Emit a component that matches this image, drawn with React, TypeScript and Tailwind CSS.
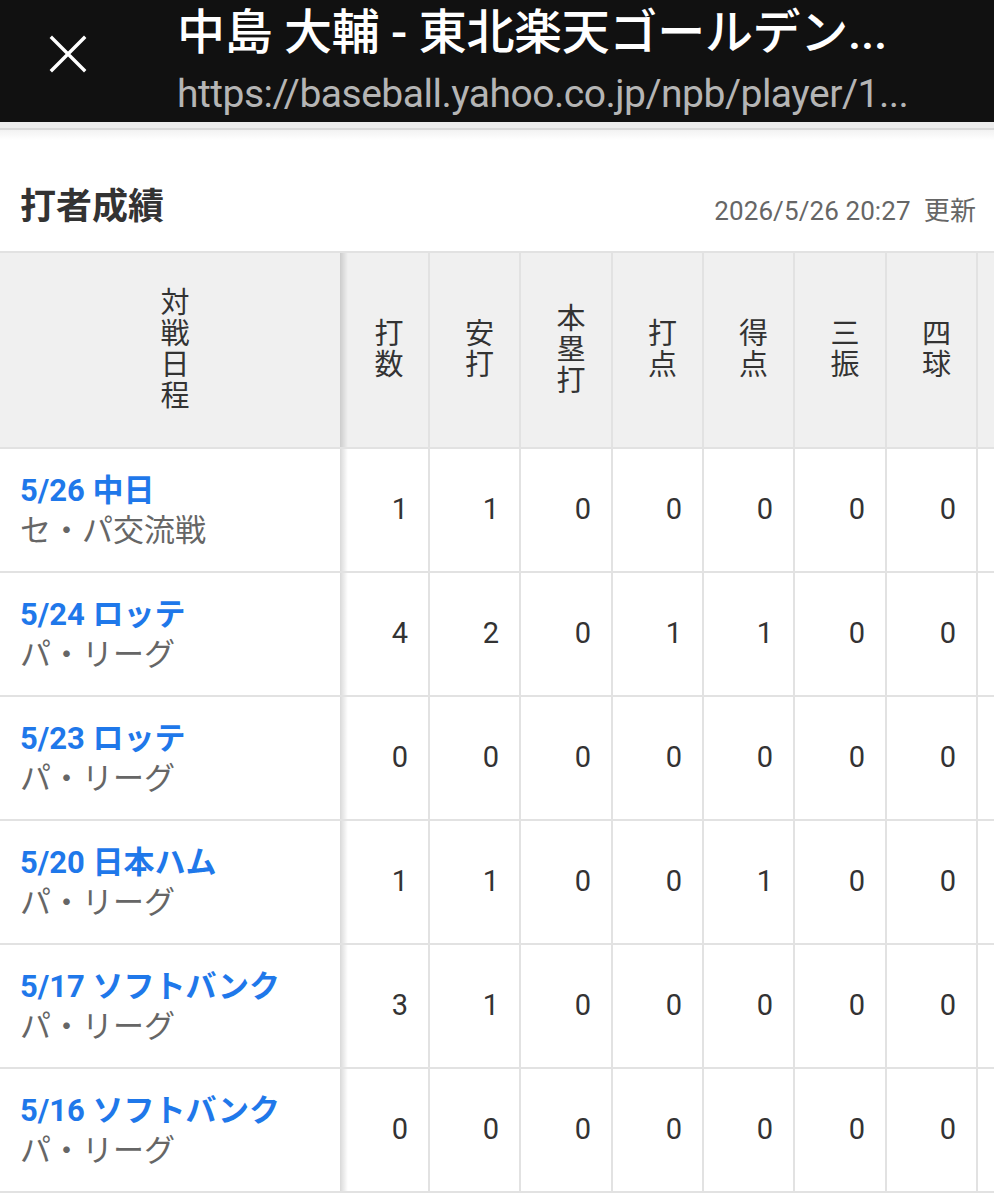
import React from "react";

const FONT = { fontFamily: "Roboto, 'Noto Sans CJK JP', 'Noto Sans', sans-serif" };

const headers = ["打数", "安打", "本塁打", "打点", "得点", "三振", "四球"];
const widths = ["w-[90px]", "w-[91px]", "w-[92px]", "w-[91px]", "w-[91px]", "w-[92px]", "w-[91px]"];

const rows = [
  { date: "5/26 中日", league: "セ・パ交流戦", v: [1, 1, 0, 0, 0, 0, 0] },
  { date: "5/24 ロッテ", league: "パ・リーグ", v: [4, 2, 0, 1, 1, 0, 0] },
  { date: "5/23 ロッテ", league: "パ・リーグ", v: [0, 0, 0, 0, 0, 0, 0] },
  { date: "5/20 日本ハム", league: "パ・リーグ", v: [1, 1, 0, 0, 1, 0, 0] },
  { date: "5/17 ソフトバンク", league: "パ・リーグ", v: [3, 1, 0, 0, 0, 0, 0] },
  { date: "5/16 ソフトバンク", league: "パ・リーグ", v: [0, 0, 0, 0, 0, 0, 0] },
];

function VText({ text }: { text: string }) {
  return (
    <div className="flex flex-col items-center text-[29px] leading-[31px] text-[#333]">
      {text.split("").map((c, i) => (
        <span key={i} className="block h-[31px]">
          {c}
        </span>
      ))}
    </div>
  );
}

const firstCol =
  "relative z-10 w-[340px] shrink-0 after:content-[''] after:absolute after:top-0 after:bottom-0 after:left-full after:w-[8px] after:bg-gradient-to-r after:from-black/15 after:to-transparent";

export default function App() {
  return (
    <div className="w-[994px] h-[1200px] overflow-hidden bg-white" style={FONT}>
      {/* top bar */}
      <div className="h-[122px] bg-[#111111] flex items-start">
        <div className="w-[136px] h-[108px] flex items-center justify-center shrink-0">
          <svg width="38" height="38" viewBox="0 0 38 38">
            <path d="M3 3 L35 35 M35 3 L3 35" stroke="#ffffff" strokeWidth="3.4" strokeLinecap="square" />
          </svg>
        </div>
        <div className="pl-[41px] pt-[5px] flex flex-col min-w-0">
          <div className="text-white text-[48px] leading-[56px] font-medium whitespace-nowrap tracking-[-0.3px]">
            中島 大輔 - 東北楽天ゴールデン...
          </div>
          <div className="text-[#b5b5b5] text-[39px] leading-[46px] mt-[10px] whitespace-nowrap tracking-[-0.5px]">
            https://baseball.yahoo.co.jp/npb/player/1...
          </div>
        </div>
      </div>
      <div className="h-[6px] bg-[#ededed]" />
      <div className="h-[2px] bg-[#d9d9d9]" />
      <div className="h-[10px] bg-gradient-to-b from-[#f2f2f2] to-white" />

      {/* section heading */}
      <div className="flex items-center justify-between px-[20px] h-[111px] pt-[23px]">
        <div className="text-[36px] leading-[44px] font-bold text-[#333]">打者成績</div>
        <div className="text-[26px] leading-[34px] text-[#666] mt-[8px] -mr-[2px] tracking-[0.1px]">
          2026/5/26 20:27&nbsp;&nbsp;更新
        </div>
      </div>

      {/* table */}
      <div className="border-t-2 border-[#e2e2e2]">
        {/* header row */}
        <div className="flex h-[196px] bg-[#f0f0f0] border-b-2 border-[#e2e2e2]">
          <div className={`${firstCol} flex items-center justify-center bg-[#f0f0f0] pl-[10px]`}>
            <VText text="対戦日程" />
          </div>
          {headers.map((h, i) => (
            <div
              key={h}
              className={`${widths[i]} shrink-0 border-r-2 border-[#e2e2e2] flex items-center justify-center pl-[10px]`}
            >
              <VText text={h} />
            </div>
          ))}
          <div className="w-[40px] shrink-0" />
        </div>

        {rows.map((r, ri) => (
          <div key={ri} className="flex h-[124px] border-b-2 border-[#e2e2e2]">
            <div className={`${firstCol} bg-white flex flex-col justify-center pl-[20px] pt-[2px]`}>
              <div className="text-[31px] leading-[40px] font-bold text-[#1f78ea]">{r.date}</div>
              <div className="text-[31px] leading-[40px] text-[#666]">{r.league}</div>
            </div>
            {r.v.map((v, i) => (
              <div
                key={i}
                className={`${widths[i]} shrink-0 border-r-2 border-[#e2e2e2] flex items-center justify-end pr-[20px] text-[29px] text-[#333]`}
              >
                {v}
              </div>
            ))}
            <div className="w-[40px] shrink-0" />
          </div>
        ))}
      </div>
    </div>
  );
}
